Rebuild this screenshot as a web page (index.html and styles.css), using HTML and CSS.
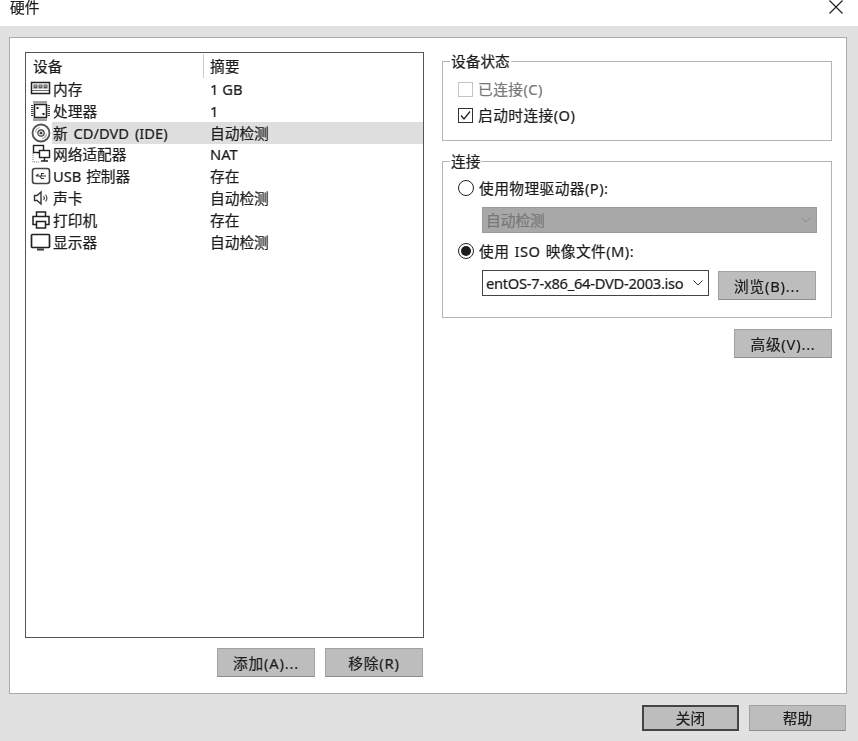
FILE: index.html
```html
<!DOCTYPE html>
<html lang="zh-CN">
<head>
<meta charset="utf-8">
<title>硬件</title>
<link rel="stylesheet" href="styles.css">
</head>
<body>
<div class="window">
  <header class="titlebar">
    <span class="title">硬件</span>
    <svg class="close" width="16" height="16" viewBox="0 0 16 16"><path d="M1.5 1.5 14.5 14.5M14.5 1.5 1.5 14.5" fill="none" stroke="#222" stroke-width="1.2"/></svg>
  </header>
  <main class="panel">
    <section class="left">
      <div class="list">
        <div class="list-head"><span class="head-a">设备</span><span class="head-b">摘要</span></div>
        <div class="row"><svg class="ico" viewBox="0 0 21 20"><rect x="1.500" y="3.500" width="18" height="11" fill="#fff" stroke="#222" stroke-width="1.500"/><path d="M3.500 5.500h4v4h-4zM8.500 5.500h4v4h-4zM13.500 5.500h4v4h-4z" fill="#555"/><path d="M4.500 7h2M9.500 7h2M14.500 7h2" stroke="#ddd" stroke-width="1"/><path d="M2 11.500h17" stroke="#666" stroke-width="1"/></svg><div class="cells"><span class="name">内存</span><span class="val">1 GB</span></div></div>
        <div class="row"><svg class="ico" viewBox="0 0 21 20"><rect x="4.500" y="3.500" width="12" height="13" fill="#fff" stroke="#222" stroke-width="1.500"/><path d="M4 0v2.500M6 0v2.500M8 0v2.500M10 0v2.500M12 0v2.500M14 0v2.500M16 0v2.500M4 17.500v2.500M6 17.500v2.500M8 17.500v2.500M10 17.500v2.500M12 17.500v2.500M14 17.500v2.500M16 17.500v2.500M1 4.500h2.500M1 6.500h2.500M1 8.500h2.500M1 10.500h2.500M1 12.500h2.500M1 14.500h2.500M17.500 4.500h2.500M17.500 6.500h2.500M17.500 8.500h2.500M17.500 10.500h2.500M17.500 12.500h2.500M17.500 14.500h2.500" stroke="#444" stroke-width="1"/><path d="M6.500 6h2v2h-2zM12.500 12h2v2h-2z" fill="#222"/></svg><div class="cells"><span class="name">处理器</span><span class="val">1</span></div></div>
        <div class="row selected"><svg class="ico" viewBox="0 0 21 20"><circle cx="11" cy="10" r="8.500" fill="#fff" stroke="#555" stroke-width="1.800"/><circle cx="11" cy="10" r="3.200" fill="#ccc" stroke="#444" stroke-width="1.200"/><circle cx="11" cy="10" r="1.100" fill="#222"/><path d="M5.500 9.500a5.500 5.500 0 0 1 4.500-5M16.500 10.500a5.500 5.500 0 0 1-4.500 5" fill="none" stroke="#aaa" stroke-width="1.200"/></svg><div class="cells"><span class="name latin">新 CD/DVD (IDE)</span><span class="val">自动检测</span></div></div>
        <div class="row"><svg class="ico" viewBox="0 0 21 20"><rect x="3.500" y="1.500" width="10" height="7" fill="#fff" stroke="#222" stroke-width="1.400"/><rect x="9.500" y="6.500" width="10" height="7" fill="#fff" stroke="#222" stroke-width="1.400"/><path d="M14.500 13.500v3M11 17h7" stroke="#222" stroke-width="1.400"/><path d="M8 9v2M3 9v9h7" fill="none" stroke="#777" stroke-width="1" stroke-dasharray="1 1"/></svg><div class="cells"><span class="name">网络适配器</span><span class="val">NAT</span></div></div>
        <div class="row"><svg class="ico" viewBox="0 0 21 20"><rect x="2.500" y="2.500" width="17" height="15" rx="2.500" fill="#fff" stroke="#444" stroke-width="1.600"/><path d="M6 10h10M6 10l2.500-2M11.500 10V7.500H14M9.500 10l2 2.500h2.500" fill="none" stroke="#333" stroke-width="1.100"/></svg><div class="cells"><span class="name latin-usb">USB 控制器</span><span class="val">存在</span></div></div>
        <div class="row"><svg class="ico" viewBox="0 0 21 20"><path d="M4.500 7.500h2.500l4-3.500v12l-4-3.500H4.500z" fill="#fff" stroke="#333" stroke-width="1.400"/><path d="M13.500 8a3 3 0 0 1 0 4M15.500 6.500a5.500 5.500 0 0 1 0 7" fill="none" stroke="#444" stroke-width="1.100"/></svg><div class="cells"><span class="name">声卡</span><span class="val">自动检测</span></div></div>
        <div class="row"><svg class="ico" viewBox="0 0 21 20"><path d="M6.500 6.500V2h9v4.500" fill="#fff" stroke="#222" stroke-width="1.500"/><path d="M6.500 14.500H3V6.500h16v8h-3.500" fill="#fff" stroke="#222" stroke-width="1.500"/><rect x="6.500" y="11.500" width="9" height="6.500" fill="#fff" stroke="#222" stroke-width="1.500"/></svg><div class="cells"><span class="name">打印机</span><span class="val">存在</span></div></div>
        <div class="row"><svg class="ico" viewBox="0 0 21 20"><rect x="1.500" y="2.500" width="18" height="13" rx="1" fill="#fff" stroke="#222" stroke-width="1.700"/><path d="M7 17.500h7" stroke="#444" stroke-width="2.200"/></svg><div class="cells"><span class="name">显示器</span><span class="val">自动检测</span></div></div>
      </div>
      <div class="list-actions">
        <button class="btn btn-spaced">添加(A)...</button>
        <button class="btn btn-spaced">移除(R)</button>
      </div>
    </section>
    <section class="right">
      <fieldset class="group group-status">
        <legend>设备状态</legend>
        <div class="opt disabled"><span class="check"></span><span>已连接(C)</span></div>
        <div class="opt second"><span class="check on"><svg width="13" height="13" viewBox="0 0 13 13"><path d="M2 6.500 5 10 11 2.500" fill="none" stroke="#222" stroke-width="1.300"/></svg></span><span>启动时连接(O)</span></div>
      </fieldset>
      <fieldset class="group group-conn">
        <legend>连接</legend>
        <div class="opt"><span class="radio"></span><span>使用物理驱动器(P):</span></div>
        <div class="select select-off"><span>自动检测</span><svg class="chev" width="10" height="6" viewBox="0 0 10 6"><path d="M.5.500 5 5 9.500.500" fill="none" stroke="#8c8c8c" stroke-width="1"/></svg></div>
        <div class="opt iso"><span class="radio on"></span><span>使用 ISO 映像文件(M):</span></div>
        <div class="iso-row">
          <div class="select select-on"><span class="iso-name">entOS-7-x86_64-DVD-2003.iso</span><svg class="chev" width="10" height="6" viewBox="0 0 10 6"><path d="M.5.500 5 5 9.500.500" fill="none" stroke="#333" stroke-width="1"/></svg></div>
          <button class="btn btn-spaced">浏览(B)...</button>
        </div>
      </fieldset>
      <div class="adv"><button class="btn btn-spaced">高级(V)...</button></div>
    </section>
  </main>
  <footer class="footer">
    <button class="btn btn-foot btn-default">关闭</button>
    <button class="btn btn-foot">帮助</button>
  </footer>
</div>
</body>
</html>
```
FILE: styles.css
```css
* { box-sizing: border-box; }
html, body { margin: 0; padding: 0; }
body {
  width: 858px;
  height: 741px;
  overflow: hidden;
  background: #e1e1e1;
  color: #1c1c1c;
  font-family: "Noto Sans", "Noto Sans CJK SC", sans-serif;
  font-size: 14.7px;
  line-height: 20px;
  -webkit-text-stroke: .2px;
}
.window { display: flex; flex-direction: column; height: 741px; filter: grayscale(1); }
.titlebar {
  height: 26px;
  background: #fff;
  display: flex;
  justify-content: space-between;
  align-items: flex-start;
  padding: 0 14px 0 10px;
}
.title { line-height: 15px; }
.close { margin-top: -1px; }
.panel {
  margin: 11px 11px 0 9px;
  height: 657px;
  background: #fff;
  border: 1px solid #aaa;
  display: flex;
  padding: 14px 13px 0 15px;
}
.left { width: 399px; }
.list {
  height: 586px;
  border: 1px solid #555;
  background: #fff;
}
.list-head {
  height: 25px;
  display: flex;
  align-items: center;
}
.head-a { width: 178px; padding-left: 7px; height: 24px; line-height: 24px; border-right: 1px solid #ccc; }
.head-b { padding-left: 6px; line-height: 24px; height: 24px; }
.row {
  height: 21.85px;
  display: flex;
  align-items: center;
  padding-left: 4px;
}
.ico { width: 21px; height: 20px; flex: none; }
.cells {
  flex: 1;
  height: 100%;
  display: flex;
  align-items: center;
  margin-left: 1px;
}
.selected .cells { background: #dedede; }
.name { width: 158px; padding-left: 1px; white-space: nowrap; }
.latin { word-spacing: 2px; }
.latin-usb { word-spacing: 1px; }
.val { white-space: nowrap; }
.right { width: 390px; margin-left: 18px; }
.group {
  margin: 0;
  padding: 0 0 0 15px;
  border: 1px solid #b4b4b4;
  min-width: 0;
}
.group legend { padding: 0 1px; margin-left: -8px; line-height: 18px; }
.group-status { height: 89px; margin-top: 0; padding-top: 9px; }
.group-conn { height: 166px; margin-top: 11px; padding-top: 8px; }
.opt { display: flex; align-items: center; height: 20px; gap: 5px; letter-spacing: .45px; }
.opt.second { margin-top: 6px; }
.opt.disabled { color: #777; }
.check {
  width: 15px;
  height: 15px;
  border: 1px solid #c4c4c4;
  display: flex;
  align-items: center;
  justify-content: center;
}
.check.on { border-color: #333; }
.radio {
  width: 16px;
  height: 16px;
  border: 1.4px solid #222;
  border-radius: 50%;
  display: flex;
  align-items: center;
  justify-content: center;
}
.radio.on::after {
  content: "";
  width: 10px;
  height: 10px;
  border-radius: 50%;
  background: #1c1c1c;
}
.select {
  height: 26px;
  display: flex;
  align-items: center;
  justify-content: space-between;
  padding: 0 5px 0 3px;
  white-space: nowrap;
}
.select-off {
  width: 335px;
  margin: 9px 0 0 24px;
  background: #a8a8a8;
  border: 1px solid #9c9c9c;
  color: #777;
}
.opt.iso { margin-top: 8px; word-spacing: 1px; }
.iso-row { display: flex; align-items: flex-start; margin: 9px 0 0 24px; }
.select-on { width: 227px; border: 1px solid #444; background: #fff; }
.iso-name { letter-spacing: -.27px; }
.btn {
  font: inherit;
  color: #1c1c1c;
  width: 98px;
  height: 29px;
  padding: 0;
  background: #bdbdbd;
  border: 1px solid #a2a2a2;
  border-bottom-color: #8e8e8e;
  border-radius: 0;
}
.btn-spaced { letter-spacing: .8px; }
.iso-row .btn { margin: 1px 0 0 9px; }
.adv { display: flex; justify-content: flex-end; margin-top: 11px; }
.list-actions { display: flex; justify-content: flex-end; gap: 10px; margin-top: 10px; padding-right: 1px; }
.footer { display: flex; justify-content: flex-end; gap: 10px; padding-right: 12px; margin-top: 11px; }
.btn-foot { height: 26px; width: 97px; }
.btn-default { border: 2px solid #444; }
```
